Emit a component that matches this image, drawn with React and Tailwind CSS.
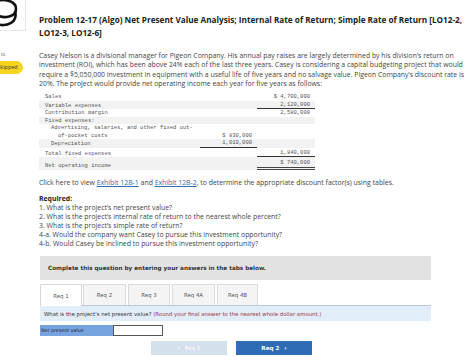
import React from "react";

const sans = { fontFamily: '"Open Sans", "Liberation Sans", sans-serif' };

function Row({ label, c1, c2, gray, indent = 6, c1b, c2b, c2dbl, children }) {
  return (
    <div className={`flex items-end ${gray ? "bg-[#f2f2f2]" : ""}`}>
      <div className="flex-1 leading-[7.5px]" style={{ paddingLeft: indent }}>
        {children || label}
      </div>
      <div className={`w-[57px] text-right pr-[5px] leading-[7.5px] ${c1b ? "border-b border-[#333]" : ""}`}>{c1}</div>
      <div className={`w-[58px] text-right pr-[5px] leading-[7.5px] ${c2b ? "border-b border-[#333]" : ""} ${c2dbl ? "border-b-[3px] border-double border-[#444]" : ""}`}>{c2}</div>
    </div>
  );
}

export default function App() {
  return (
    <div className="w-[474px] h-[357px] overflow-hidden bg-white flex text-[#333]" style={sans}>
      {/* left rail */}
      <div className="w-[39px] shrink-0 flex flex-col">
        <div className="w-[26px] h-[31px] border-r border-b border-[#e6e6e6] overflow-hidden">
          <svg width="26" height="31" viewBox="0 0 26 31">
            <path d="M-4 2 C 2 -2, 16 0, 16 9 C 16 17, 4 19, -3 15" fill="none" stroke="#111" strokeWidth="2.6" />
            <path d="M15 11 C 17 18, 14 24, 4 25 C 0 25.5, -2 24, -3 23" fill="none" stroke="#111" strokeWidth="2.6" />
          </svg>
        </div>
        <div className="mt-[20px] text-[5px] text-[#666] leading-[6px] ml-[1px]">ts</div>
        <div className="mt-[4px] ml-[-8px] w-[31px] h-[13px] rounded-full bg-[#f7d51d] flex items-center justify-center text-[5.5px] text-[#333]">
          Skipped
        </div>
      </div>

      {/* main */}
      <div className="flex-1 pr-[2px]">
        <h1 className="mt-[13px] text-[8.2px] leading-[13px] font-bold text-[#222]">
          Problem 12-17 (Algo) Net Present Value Analysis; Internal Rate of Return; Simple Rate of Return [LO12-2, LO12-3, LO12-6]
        </h1>
        <p className="mt-[12px] pr-[2px] text-[6.9px] leading-[9.3px] text-[#444]">
          Casey Nelson is a divisional manager for Pigeon Company. His annual pay raises are largely determined by his division’s return on investment (ROI), which has been above 24% each of the last three years. Casey is considering a capital budgeting project that would require a $5,050,000 investment in equipment with a useful life of five years and no salvage value. Pigeon Company’s discount rate is 20%. The project would provide net operating income each year for five years as follows:
        </p>

        <div
          className="mt-[5px] w-[276px] text-[5.5px] text-[#555]"
          style={{ fontFamily: '"Liberation Mono", "DejaVu Sans Mono", monospace' }}
        >
          <Row label="Sales" c2="$ 4,700,000" />
          <Row label="Variable expenses" c2="2,120,000" gray c2b />
          <Row label="Contribution margin" c2="2,580,000" />
          <Row label="Fixed expenses:" gray />
          <Row c1="$ 830,000" indent={12}>
            <div>Advertising, salaries, and other fixed out-</div>
            <div className="pl-[7px]">of-pocket costs</div>
          </Row>
          <Row label="Depreciation" c1="1,010,000" gray indent={12} c1b />
          <div className="h-[1px]" />
          <Row label="Total fixed expenses" c2="1,840,000" c2b />
          <div className="bg-[#f2f2f2] pt-[2px]">
            <Row label="Net operating income" c2="$ 740,000" c2dbl />
          </div>
        </div>

        <p className="mt-[8px] text-[6.9px] leading-[9px] text-[#444]">
          Click here to view <span className="text-[#2b6cb5] underline">Exhibit 12B-1</span> and{" "}
          <span className="text-[#2b6cb5] underline">Exhibit 12B-2</span>, to determine the appropriate discount factor(s) using tables.
        </p>

        <div className="mt-[7px] text-[6.9px] leading-[9.1px] text-[#444]">
          <div className="font-bold text-[#222]">Required:</div>
          <div>1. What is the project’s net present value?</div>
          <div>2. What is the project’s internal rate of return to the nearest whole percent?</div>
          <div>3. What is the project’s simple rate of return?</div>
          <div>4-a. Would the company want Casey to pursue this investment opportunity?</div>
          <div>4-b. Would Casey be inclined to pursue this investment opportunity?</div>
        </div>

        <div className="ml-[1px] w-[391px]" style={{ fontFamily: '"DejaVu Sans", Verdana, sans-serif' }}>
          <div className="mt-[8px] h-[24px] bg-[#e2e2e2] flex items-center pl-[8px] text-[5.7px] font-bold text-[#333]">
            Complete this question by entering your answers in the tabs below.
          </div>
          <div className="mt-[4px] flex items-end h-[22px] text-[5.4px] text-[#555]">
            <div className="w-[42px] h-[22px] bg-white border border-b-0 border-[#d6d6d6] flex items-center justify-center">Req 1</div>
            <div className="flex-1 flex items-end h-[22px] border-b border-[#b9c8d8] gap-[2px] pl-[1px]">
              <div className="w-[43px] h-[21px] bg-[#f4f4f4] border border-b-0 border-[#dcdcdc] flex items-center justify-center">Req 2</div>
              <div className="w-[42px] h-[21px] bg-[#f4f4f4] border border-b-0 border-[#dcdcdc] flex items-center justify-center">Req 3</div>
              <div className="w-[43px] h-[21px] bg-[#f4f4f4] border border-b-0 border-[#dcdcdc] flex items-center justify-center">Req 4A</div>
              <div className="w-[41px] h-[21px] bg-[#f4f4f4] border border-b-0 border-[#dcdcdc] flex items-center justify-center">Req 4B</div>
            </div>
          </div>
          <div className="h-[15px] bg-[#e1edf9] flex items-center pl-[4px] text-[5.4px] text-[#333]">
            What is the project's net present value?&nbsp;<span className="text-[#a3333d]">(Round your final answer to the nearest whole dollar amount.)</span>
          </div>
          <div className="mt-[4px] flex h-[11px]">
            <div className="w-[73px] bg-[#77a4de] text-[4.8px] text-[#223] flex items-center pl-[1px]">Net present value</div>
            <div className="w-[50px] bg-white border border-[#555]" />
          </div>
          <div className="mt-[5px] flex justify-center gap-[9px] pr-[8px]">
            <div className="w-[76px] h-[14px] bg-[#d5e0ed] text-white text-[5.6px] flex items-center justify-center gap-[5px]">
              <span>‹</span><span>Req 1</span>
            </div>
            <div className="w-[76px] h-[14px] bg-[#2e6db6] text-white text-[5.6px] font-bold flex items-center justify-center gap-[5px]">
              <span>Req 2</span><span>›</span>
            </div>
          </div>
        </div>
      </div>
    </div>
  );
}
